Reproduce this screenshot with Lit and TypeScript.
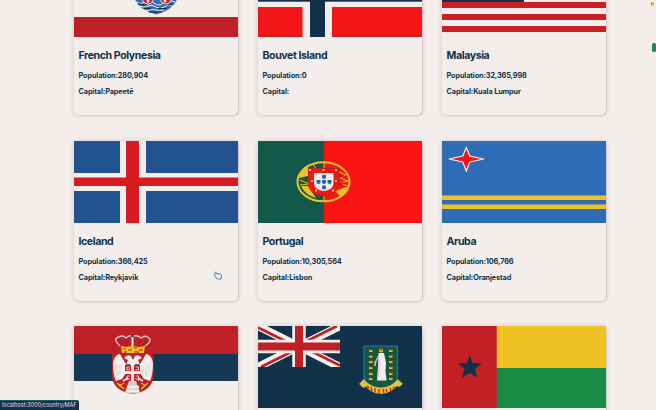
import { LitElement, html, css, svg, nothing, SVGTemplateResult } from "lit";
import { customElement, property } from "lit/decorators.js";

const NAVY = "#12324a", RED = "#bf2026", HOT = "#f91313", BLUE = "#2e6cb8";
const GOLD = "#eec222", GREEN = "#188b45", PAPER = "#f3eeeb", GREY = "#d6c9cc";

const rect = (x: number, y: number, w: number, h: number, fill: string) =>
  svg`<rect x=${x} y=${y} width=${w} height=${h} fill=${fill} />`;

const polynesia = svg`
  ${rect(0, 0, 164, 21, RED)}${rect(0, 62, 164, 20, RED)}
  <path d="M60 42h44q-4 13-22 17.5Q64 55 60 42z" fill=${BLUE} />
  <path d="M62 47q5 3 9 0t9 1 9 0 12-1M65 51q5 2 9 0t8 1 8 0 9-1M69 55q4 1 7 0t6 0 8 0" stroke=${PAPER} stroke-width="1" fill="none" />
  <path d="M64 48.5q5 2 9 1M90 49q5 2 9 0M70 53.5h7M84 53.5h9M75 57h13" stroke=${NAVY} stroke-width="1.2" fill="none" />
  <path d="M68 43q1 6 6 6t5-6zM86 43q1 6 6 6t5-6z" fill=${RED} stroke=${PAPER} />
  <circle cx="74" cy="46" r="1.5" fill=${PAPER} /><circle cx="91" cy="46" r="1.5" fill=${PAPER} />`;

const bouvet = svg`
  ${rect(0, 0, 164, 82, "#f31518")}${rect(44.5, 0, 29.5, 82, PAPER)}${rect(0, 30, 164, 22, PAPER)}
  ${rect(52, 0, 15, 82, NAVY)}${rect(0, 36, 164, 10, NAVY)}${rect(0, 46, 52, 1, BLUE)}${rect(67, 46, 97, 1, BLUE)}
  ${rect(0, 81, 44.5, 1, RED)}${rect(74, 81, 90, 1, RED)}`;

const malaysia = svg`
  ${[0, 1, 2, 3, 4, 5, 6].map((i) => rect(0, i * 12 - 1, 164, 6, "#c92025"))}
  ${rect(0, 0, 82, 47, NAVY)}`;

const iceland = svg`
  ${rect(0, 0, 164, 82, "#225390")}${rect(46, 0, 26, 82, PAPER)}${rect(0, 32, 164, 18, PAPER)}
  ${rect(52, 0, 13, 82, "#d71b20")}${rect(0, 36.5, 164, 8.5, "#d71b20")}`;

const portugal = svg`
  ${rect(0, 0, 66, 82, "#14584a")}${rect(66, 0, 98, 82, HOT)}
  <ellipse cx="65.5" cy="40.8" rx="26" ry="19.5" fill="none" stroke=${GOLD} stroke-width="2" />
  <path d="M41 37q1-9 9-13v11zM43 45h7l8 12q-11-3-15-12zM91 45q-3 7-9 10l-5-5z" fill=${GOLD} />
  <path d="M42 39l9 4-9 1M66 22v6M66 54v6M81 31l7 3-6 3 8 3-9 2 9 3M46 30l6 5M55 24l4 4" fill="none" stroke=${GOLD} stroke-width="1" />
  <path d="M81 33l7 2-7 2zM80 41l9 1-9 3z" fill=${RED} />
  <path d="M50.5 27.5h30v14q0 12-15 13.5-15-1.500-15-13.5z" fill=${HOT} stroke=${RED} stroke-width="1" />
  <path d="M56 32h19.500v11q-1 6-9.800 7-8.700-1-9.700-7z" fill=${PAPER} />
  ${[[51, 28], [64.5, 28], [77, 28], [53, 39], [77, 39], [57, 48.5], [74, 48.5]].map(([x, y]) => rect(x, y, 2, 2, GOLD))}
  ${[[64, 34], [58.500, 39], [64, 39], [69.500, 39], [64, 44.500]].map(
    ([x, y]) => svg`<path d="M${x} ${y}h4v3q-2 2-4 0z" fill=${BLUE} /><rect x=${x + 1.5} y=${y + 1} width="1" height="1" fill=${NAVY} />`)}`;

const aruba = svg`
  ${rect(0, 0, 164, 82, BLUE)}${rect(0, 54.500, 164, 4.500, GOLD)}${rect(0, 63.500, 164, 4.700, GOLD)}
  ${rect(0, 68, 164, 0.8, GREEN)}
  <path d="M24.300 6.500l3.500 8.500 14 3-14 3-3.500 9-3.500-9-14-3 14-3z" fill=${HOT} stroke=${PAPER} stroke-width="1.200" />`;

const serbia = svg`
  ${rect(0, 0, 164, 82, PAPER)}${rect(0, 0, 164, 28, RED)}${rect(0, 28, 164, 27, "#153955")}
  <path d="M38 27h41.500v23q-1 15-20.700 18Q39 65 38 50z" fill=${RED} />
  <path d="M46 20q-7-7-3-8 5-4 9 0 2-3 7-2 5-1 8 2 5-4 9 1 1 3-5 7" fill="none" stroke=${GREY} stroke-width="1.300" />
  <path d="M49 20l-3-6M53 20l-1-7M65 20l1-7M69 20l3-6" stroke="#9c1d28" stroke-width="1" />
  <path d="M58.500 10v10" stroke=${PAPER} stroke-width="2" /><circle cx="58.500" cy="10" r="1.300" fill=${NAVY} />
  <path d="M47 20l5 1 6-1 7 1 6-1-1 7H48z" fill=${GOLD} />
  <path d="M49 23h3m2 1h4m2-2h3m2 2h4M50 26h3m7 0h5" stroke=${RED} stroke-width="1" />
  <path d="M45 28q-5 2-6 9 0 12 3 18l6-2 4-6V38q-4-6-6-10zM73 28q5 2 6 9 0 12-3 18l-6-2-4-6V38q4-6 6-10z" fill=${PAPER} />
  <path d="M41 37v8m2-7v10m3-9v8m29-10v9m-3-8v11m-3-9v8M42 50l4-3m29 3l-4-3" stroke=${GREY} stroke-width=".8" />
  <path d="M52 39l2-5-4-2q3-4 7-2l2 4 2-4q4-2 7 2l-4 2 2 5-1 16H53z" fill=${PAPER} />
  <path d="M51 39h15v14q-3 3-7.500 4-5-1-7.500-4z" fill=${RED} />
  <path d="M58.500 39v17M51 46.500h15" stroke=${PAPER} stroke-width="3" />
  <path d="M56 41h-3v3h3m-1-1.500h1M61.500 41h3v3h-3M56 50h-3v3h3M61.500 50h3v3h-3" fill="none" stroke=${PAPER} stroke-width=".8" />
  <path d="M52 38.800h4m5 0h4" stroke=${NAVY} stroke-width="1" />
  <path d="M55 55h7l4 11q-7 3-15 0z" fill=${GREY} /><path d="M53 61h12M52 65h13" stroke=${PAPER} stroke-width="2.500" />
  <path d="M43 57l7 6m0-6l-5 3M74 57l-7 6m0-6l5 3" stroke=${GOLD} stroke-width="1.300" />
  <path d="M49 55l5-3M69 55l-5-3" stroke=${PAPER} stroke-width="2" />`;

const virgin = svg`
  ${rect(0, 0, 164, 82, NAVY)}
  <svg width="82" height="41" viewBox="0 0 82 41">
    <path d="M0 0l82 41M82 0L0 41" stroke=${PAPER} stroke-width="8" />
    <path d="M0 1.500L37 20M82 39.500L45 21M79 0L41 19M3 41l38-19" stroke=${RED} stroke-width="2.800" />
    <path d="M41 0v41M0 20.500h82" stroke=${PAPER} stroke-width="13.500" />
    <path d="M41 0v41M0 20.500h82" stroke=${RED} stroke-width="8" />
  </svg>
  <path d="M106 20h33.500v31q-1 9-17 14-15-5-16.500-14z" fill="#155840" stroke=${BLUE} stroke-width="1.200" />
  ${[24, 29.500, 35, 41, 47, 52].map((y) => [111, 131].map((x) => svg`
    <rect x=${x} y=${y} width="3.500" height="2" fill=${GOLD} /><rect x=${x + 1} y=${y - 1} width="1.500" height="1.500" fill=${RED} />`))}
  <circle cx="123" cy="24.500" r="2" fill=${GOLD} /><circle cx="123" cy="23.800" r="1" fill=${RED} />
  <path d="M120.500 27h5.500l2 10-.5 8 1 9.500h-9.500l1-14z" fill=${PAPER} />
  <path d="M121 29l-3 6-1 5M121 34v10l-1 10" stroke=${GREY} fill="none" stroke-width="1.200" />
  <path d="M117 35v5" stroke=${GOLD} />
  <path d="M101.500 58l4-4.500q7 8 17.500 8.500 10-.5 17-8.500l4.500 4.500-3 2.500-3-.5q-7 7.500-15.500 7.500T108 60.500l-3 1z" fill=${GOLD} stroke=${GREY} stroke-width=".5" />
  <path d="M109 60l2 2m2-1l1 4m3-3v4m4-3v4m4-4l1 4m2-4l1 3m3-4l1 3m2-4l2 2" stroke=${RED} stroke-width="1.300" />`;

const bissau = svg`
  ${rect(0, 0, 55, 82, "#c31f25")}${rect(54.700, 0, 110, 42, GOLD)}${rect(54.700, 42, 110, 40, GREEN)}
  <path d="M27.700 29l3 8.300h9l-6.500 5.500 2 9.200-7.500-5-7.700 5 2.300-9.200-6.700-5.500h9z" fill=${NAVY} />`;

interface Country {
  flag: SVGTemplateResult;
  name?: string;
  population?: string;
  capital?: string;
}

const countries: Country[] = [
  { name: "French Polynesia", population: "280,904", capital: "Papeetē", flag: polynesia },
  { name: "Bouvet Island", population: "0", capital: "", flag: bouvet },
  { name: "Malaysia", population: "32,365,998", capital: "Kuala Lumpur", flag: malaysia },
  { name: "Iceland", population: "366,425", capital: "Reykjavik", flag: iceland },
  { name: "Portugal", population: "10,305,564", capital: "Lisbon", flag: portugal },
  { name: "Aruba", population: "106,766", capital: "Oranjestad", flag: aruba },
  { flag: serbia },
  { flag: virgin },
  { flag: bissau },
];

@customElement("country-card")
export class CountryCard extends LitElement {
  @property({ attribute: false }) country!: Country;

  static styles = css`
    :host {
      display: block;
      height: 160px;
      border-radius: 5px;
      background: #f3eeeb;
      box-shadow: 0 0 4px 1px #ded3d4, 1px 1px 1px #cfc1c5;
    }
    .flag { display: block; width: 164px; height: 82px; }
    .info { padding: 12px 4.5px 0; }
    .name { margin: 0 0 8px; font-size: 10.6px; line-height: 14px; font-weight: 700; letter-spacing: -0.42px; }
    .fact { margin: 0 0 6px; font-size: 7.3px; line-height: 10px; font-weight: 700; letter-spacing: -0.12px; white-space: nowrap; }
  `;

  render() {
    const c = this.country;
    return html`
      <svg class="flag" viewBox="0 0 164 82">${c.flag}</svg>
      ${c.name
        ? html`<div class="info">
            <h2 class="name">${c.name}</h2>
            <p class="fact">Population:${c.population}</p>
            <p class="fact">Capital:${c.capital}</p>
          </div>`
        : nothing}`;
  }
}

@customElement("app-root")
export class AppRoot extends LitElement {
  static styles = css`
    :host {
      display: block;
      position: relative;
      height: 410px;
      overflow: hidden;
      background: #f3eeeb;
      color: #12324a;
      font-family: Inter, "Liberation Sans", sans-serif;
    }
    .grid {
      display: grid;
      grid-template-columns: repeat(3, 164px);
      gap: 25.4px 20px;
      margin: -44.7px 0 0 74px;
    }
    .status {
      position: absolute;
      left: 0;
      bottom: 0;
      box-sizing: border-box;
      width: 79px;
      height: 10px;
      padding-left: 2px;
      border-top: 1px solid #1d5a63;
      border-top-right-radius: 2px;
      background: #12324a;
      color: #e3dfe0;
      font-size: 5.5px;
      line-height: 9px;
      white-space: nowrap;
    }
    .pointer { position: absolute; left: 213px; top: 270px; }
    .edge { position: absolute; right: 0; top: 0; }
  `;

  render() {
    return html`
      <main class="grid">
        ${countries.map((c) => html`<country-card .country=${c}></country-card>`)}
      </main>
      <svg class="pointer" width="10" height="11" viewBox="0 0 10 11">
        <path d="M2.500 2l1.500 2 3-.5 1.500 2-.5 3.500H4L1.500 5.500z" fill="#f3eeeb" stroke="#2e6cb8" stroke-width=".9" />
        <path d="M2 2.500V1M4 9h3" stroke="#d6c9cc" />
      </svg>
      <svg class="edge" width="6" height="56" viewBox="0 0 6 56">
        <rect x="1" y="2" width="3" height="4" fill="#eec222" />
        <rect x="1" y="3" width="1" height="1" fill="#bf2026" />
        <rect x="2" y="43" width="4" height="9" rx="1.500" fill="#188b45" />
        <rect x="3" y="45" width="2" height="5" fill="#2e6cb8" />
      </svg>
      <div class="status">localhost:3000/country/MAF</div>`;
  }
}
